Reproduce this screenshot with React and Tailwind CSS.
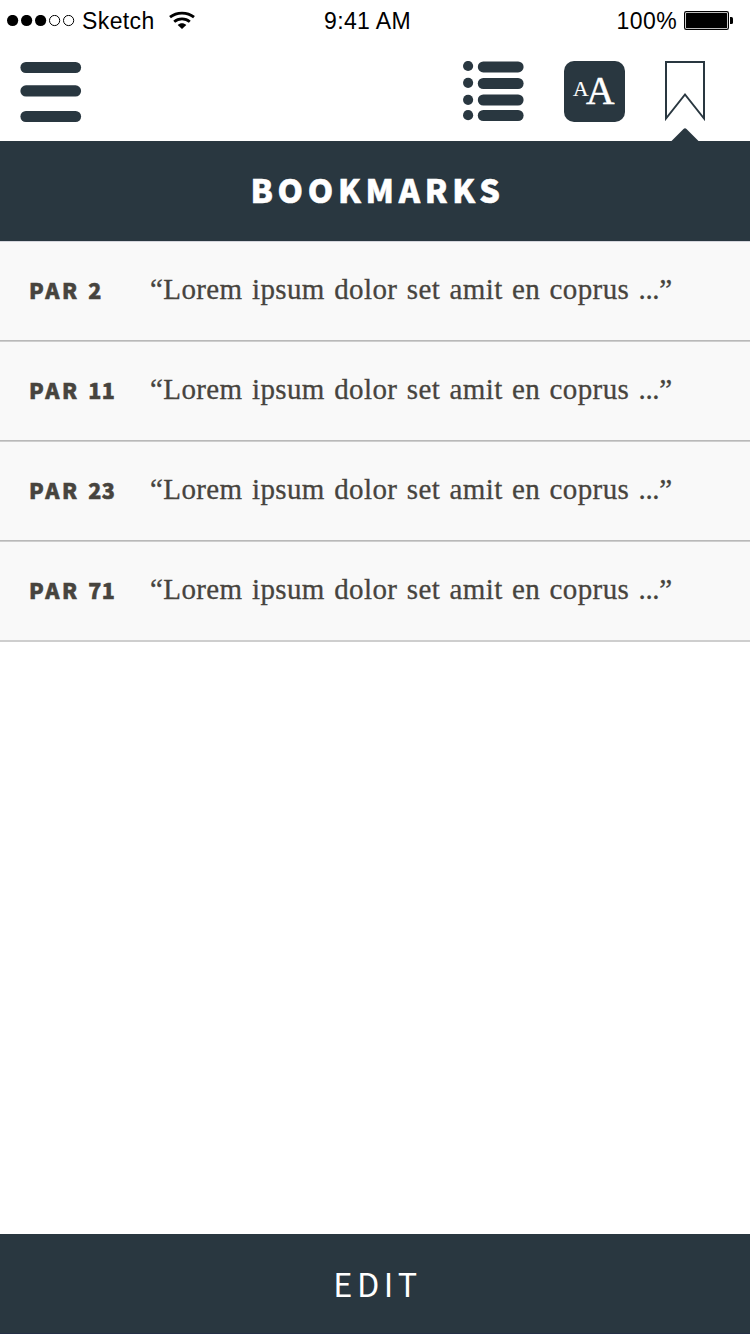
const SANS = "font-['Noto_Sans_CJK_JP','Noto_Sans_CJK_SC',sans-serif]";

const bookmarks = [2, 11, 23, 71];

function StatusBar() {
  return (
    <div className="grid h-[42px] grid-cols-3 items-center font-['Liberation_Sans',sans-serif] text-[23px] leading-[42px] text-black">
      <div className="flex items-center pl-[7px]">
        <svg width="68" height="12" viewBox="0 0 68 12" className="shrink-0">
          <circle cx="5.6" cy="5.5" r="5.6" />
          <circle cx="19.6" cy="5.5" r="5.6" />
          <circle cx="33.6" cy="5.5" r="5.6" />
          <circle cx="47.6" cy="5.5" r="5.1" fill="none" stroke="#000" />
          <circle cx="61.6" cy="5.5" r="5.1" fill="none" stroke="#000" />
        </svg>
        <span className="ml-[7px] tracking-[0.4px]">Sketch</span>
        <svg width="26" height="18" viewBox="0 0 26 18" className="ml-[14px] -mt-[2px] shrink-0" fill="none" stroke="#000" strokeWidth="2.8">
          <path d="M1 6.2C7.8 .7 18.2 .7 25 6.2" />
          <path d="M5.2 10.7C9.6 6.9 16.4 6.9 20.8 10.7" />
          <path d="M8.7 13.9c2.5-2.2 6.1-2.2 8.6 0L13 18z" fill="#000" stroke="none" />
        </svg>
      </div>
      <div className="pr-[15px] text-center tracking-[0.35px]">9:41 AM</div>
      <div className="flex items-center justify-end pr-[17px]">
        <span className="mr-[7px] tracking-[0.4px]">100%</span>
        <svg width="49" height="19" viewBox="0 0 49 19" className="-mt-[2px] shrink-0">
          <rect x=".6" y=".6" width="43.8" height="17.8" rx="1.6" fill="none" stroke="#000" strokeWidth="1.2" />
          <rect x="2" y="2" width="41" height="15" rx=".5" />
          <path d="M46 6h1.5q1.5 0 1.5 1.5v4q0 1.5-1.5 1.5H46z" />
        </svg>
      </div>
    </div>
  );
}

function Toolbar() {
  return (
    <div className="flex h-[99px] items-start pl-5 pt-[19px]">
      <svg width="62" height="62" viewBox="0 0 62 62" fill="#293740">
        <rect x=".4" y="1" width="60.7" height="11" rx="5.5" />
        <rect x=".4" y="24.3" width="60.7" height="11.3" rx="5.6" />
        <rect x=".4" y="50" width="60.7" height="11" rx="5.5" />
      </svg>
      <svg width="62" height="62" viewBox="0 0 62 62" className="ml-[380px]" fill="#293740">
        <circle cx="6.1" cy="5" r="5.1" />
        <circle cx="6.1" cy="21.8" r="5.1" />
        <circle cx="6.1" cy="38.8" r="5.1" />
        <circle cx="6.1" cy="54.2" r="5.1" />
        <rect x="15.8" y=".4" width="45.8" height="11" rx="5.5" />
        <rect x="15.8" y="17" width="45.8" height="11" rx="5.5" />
        <rect x="15.8" y="33.5" width="45.8" height="11" rx="5.5" />
        <rect x="15.8" y="49" width="45.8" height="11" rx="5.5" />
      </svg>
      <div className="ml-10 flex h-[60.5px] w-[61px] items-start rounded-[10px] bg-[#293740] pl-[9px] font-['Liberation_Serif',serif] text-white">
        <span className="pt-[16px] text-[21.5px] leading-[24px] [-webkit-text-stroke:0.2px_white]">A</span>
        <span className="-ml-[2.5px] pt-[8px] text-[39.5px] leading-[44px] [-webkit-text-stroke:0.5px_white]">A</span>
      </div>
      <svg width="42" height="80" viewBox="0 0 42 80" className="ml-[38px] overflow-visible">
        <path d="M3 1H41V57.5L22 33.5 3 57.5z" fill="none" stroke="#293740" strokeWidth="2" />
        <path d="M8.5 80L20.5 68Q22 66.5 23.5 68L35.5 80z" fill="#293740" />
      </svg>
    </div>
  );
}

function BookmarkRow({ par }) {
  return (
    <li className="flex h-[100px] items-start border-b border-[#cecece] bg-[#f9f9f9] text-[#47443e] shadow-[inset_0_-1px_0_#b9b9b9] last:shadow-[inset_0_-1px_0_#cecece]">
      <span className={`flex w-[121px] shrink-0 pl-[29px] pt-[28px] text-[21.5px] font-black leading-[40px] [-webkit-text-stroke:0.5px_#47443e] whitespace-nowrap ${SANS}`}>
        <span className="tracking-[2.6px]">PAR</span>
        <span className="ml-[8.5px] tracking-[0.3px]">{par}</span>
      </span>
      <span className="ml-[29px] pt-[27px] font-['Liberation_Serif',serif] text-[29px] leading-[40px] tracking-[0.4px] [word-spacing:1.7px] [-webkit-text-stroke:0.3px_#47443e] whitespace-nowrap">
        “Lorem ipsum dolor set amit en coprus <span className="tracking-[-0.4px]">...”</span>
      </span>
    </li>
  );
}

export default function App() {
  return (
    <div className="flex h-[1334px] w-[750px] flex-col overflow-hidden bg-white">
      <StatusBar />
      <Toolbar />
      <h1 className={`h-[100px] bg-[#293740] pl-[5px] text-center text-[32.4px] font-black leading-[96px] tracking-[4.7px] text-white [-webkit-text-stroke:0.5px_white] ${SANS}`}>BOOKMARKS</h1>
      <ul className="border-t border-[#d5d6dd]">
        {bookmarks.map((par) => (
          <BookmarkRow key={par} par={par} />
        ))}
      </ul>
      <button className={`mt-auto h-[100px] border-b border-[#252f45] bg-[#293740] pb-[2px] pl-[5px] text-center text-[32.4px] font-normal leading-[97px] tracking-[4.5px] text-white ${SANS}`}>EDIT</button>
    </div>
  );
}
